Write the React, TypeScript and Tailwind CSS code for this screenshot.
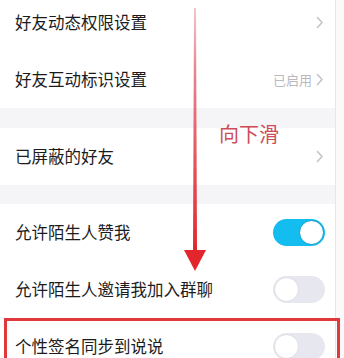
import React from "react";

type RowProps = {
    label: string;
    right?: React.ReactNode;
};

function Chevron() {
    return (
        <svg width="8" height="13" viewBox="0 0 8 13" className="ml-[4px]">
            <path
                d="M1.5 1.5 L6 6.5 L1.5 11.5"
                fill="none"
                stroke="#c4c4ca"
                strokeWidth="1.6"
                strokeLinecap="round"
                strokeLinejoin="round"
            />
        </svg>
    );
}

function Toggle({ on }: { on: boolean }) {
    return on ? (
        <div className="mr-[-1px] w-[52px] h-[27px] rounded-full bg-[#14bdf0] flex items-center justify-end pr-[1px]">
            <div className="w-[25px] h-[25px] rounded-full bg-white border border-[#0e9ccc]" />
        </div>
    ) : (
        <div className="mr-[-1px] w-[52px] h-[27px] rounded-full bg-[#e7e8ef] flex items-center pl-[1px]">
            <div className="w-[25px] h-[25px] rounded-full bg-white border border-[#dcdde3]" />
        </div>
    );
}

function Row({ label, right }: RowProps) {
    return (
        <div className="shrink-0 h-[57px] bg-white flex items-center justify-between pl-[15px] pr-[11px]">
            <span className="text-[16.5px] text-[#1c1c1e]">{label}</span>
            {right}
        </div>
    );
}

export default function App() {
    return (
        <div
            className="relative w-[344px] h-[358px] overflow-hidden bg-[#f5f5f8]"
            style={{ fontFamily: '"Noto Sans CJK SC", "Noto Sans", sans-serif' }}
        >
            <div className="flex h-full">
                <div className="w-[335px] flex flex-col -mt-[6px]">
                    <Row label="好友动态权限设置" right={<Chevron />} />
                    <Row
                        label="好友互动标识设置"
                        right={
                            <div className="flex items-center">
                                <span className="text-[13px] text-[#b9b9bf]">已启用</span>
                                <Chevron />
                            </div>
                        }
                    />
                    <div className="shrink-0 h-[20px]" />
                    <Row label="已屏蔽的好友" right={<Chevron />} />
                    <div className="shrink-0 h-[19px]" />
                    <Row label="允许陌生人赞我" right={<Toggle on />} />
                    <Row label="允许陌生人邀请我加入群聊" right={<Toggle on={false} />} />
                    <Row label="个性签名同步到说说" right={<Toggle on={false} />} />
                </div>
                <div className="flex-1 border-l border-[#e6e6ea] bg-[#fafafb]" />
            </div>

            {/* swipe hint arrow */}
            <svg className="absolute left-[180px] top-0" width="30" height="280" viewBox="0 0 30 280">
                <defs>
                    <linearGradient id="shaft" x1="0" y1="0" x2="0" y2="1">
                        <stop offset="0" stopColor="#f3c7cf" />
                        <stop offset="0.25" stopColor="#e8848f" />
                        <stop offset="1" stopColor="#e2262b" />
                    </linearGradient>
                </defs>
                <path d="M14 8 L16 8 L17 252 L13 252 Z" fill="url(#shaft)" />
                <path d="M4 250 L26 250 L15 271 Z" fill="#e2262b" />
            </svg>
            <span className="absolute left-[219px] top-[124px] text-[20px] leading-none text-[#cc4d57]">
                向下滑
            </span>

            {/* highlight box */}
            <div className="absolute left-[4px] top-[318px] w-[336px] h-[60px] border-[3px] border-[#e0383b]" />
        </div>
    );
}
